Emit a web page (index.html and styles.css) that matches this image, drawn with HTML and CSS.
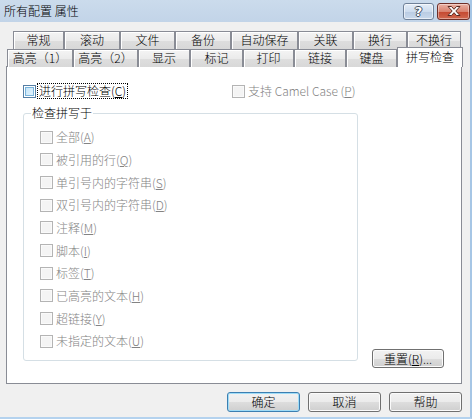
FILE: index.html
```html
<!DOCTYPE html>
<html lang="zh-CN">

<head>
  <meta charset="UTF-8">
  <meta name="viewport" content="width=device-width, initial-scale=1.0">
  <title>所有配置 属性</title>
  <link rel="stylesheet" href="styles.css">
</head>

<body>
  <div class="window">
    <div class="titlebar">
      <span class="title">所有配置 属性</span>
      <div class="caption">
        <span class="cap cap-help"><span class="cap-glyph">?</span></span>
        <span class="cap cap-close">
          <svg width="16" height="12" viewBox="0 0 16 12">
            <path d="M2 1.5h3.5L8 4.3l2.5-2.8H14L9.8 6 14 10.5h-3.5L8 7.7l-2.5 2.8H2L6.2 6z" fill="#fff" stroke="#5a2a22" stroke-width="1" stroke-linejoin="round" />
          </svg>
        </span>
      </div>
    </div>

    <div class="dialog">
      <div class="tab-row row-back">
        <div class="tab">常规</div>
        <div class="tab">滚动</div>
        <div class="tab">文件</div>
        <div class="tab">备份</div>
        <div class="tab">自动保存</div>
        <div class="tab">关联</div>
        <div class="tab">换行</div>
        <div class="tab">不换行</div>
      </div>
      <div class="tab-row row-front">
        <div class="tab">高亮（1）</div>
        <div class="tab">高亮（2）</div>
        <div class="tab">显示</div>
        <div class="tab">标记</div>
        <div class="tab">打印</div>
        <div class="tab">链接</div>
        <div class="tab">键盘</div>
        <div class="tab selected">拼写检查</div>
      </div>

      <div class="panel">
        <div class="top-options">
          <label class="check">
            <span class="box box-hot"></span>
            <span class="focus-text">进行拼写检查(<u>C</u>)</span>
          </label>
          <label class="check disabled">
            <span class="box"></span>
            <span>支持 Camel Case (<u>P</u>)</span>
          </label>
        </div>

        <div class="panel-body">
          <fieldset class="group">
            <legend>检查拼写于</legend>
            <div class="group-list">
              <label class="check disabled item"><span class="box"></span><span>全部(<u>A</u>)</span></label>
              <label class="check disabled item"><span class="box"></span><span>被引用的行(<u>Q</u>)</span></label>
              <label class="check disabled item"><span class="box"></span><span>单引号内的字符串(<u>S</u>)</span></label>
              <label class="check disabled item"><span class="box"></span><span>双引号内的字符串(<u>D</u>)</span></label>
              <label class="check disabled item"><span class="box"></span><span>注释(<u>M</u>)</span></label>
              <label class="check disabled item"><span class="box"></span><span>脚本(<u>I</u>)</span></label>
              <label class="check disabled item"><span class="box"></span><span>标签(<u>T</u>)</span></label>
              <label class="check disabled item"><span class="box"></span><span>已高亮的文本(<u>H</u>)</span></label>
              <label class="check disabled item"><span class="box"></span><span>超链接(<u>Y</u>)</span></label>
              <label class="check disabled item"><span class="box"></span><span>未指定的文本(<u>U</u>)</span></label>
            </div>
          </fieldset>
          <button class="btn btn-reset">重置(<u>R</u>)...</button>
        </div>
      </div>

      <div class="footer">
        <button class="btn btn-default">确定</button>
        <button class="btn">取消</button>
        <button class="btn">帮助</button>
      </div>
    </div>
  </div>
</body>

</html>
```

FILE: styles.css
```css
* {
  margin: 0;
  padding: 0;
  box-sizing: border-box;
}

html,
body {
  width: 472px;
  height: 419px;
  overflow: hidden;
}

body {
  background-color: #f0f0f0;
  font-family: "Noto Sans CJK SC", "Liberation Sans", sans-serif;
  font-size: 12px;
  font-weight: 300;
  color: #000;
}

.window {
  width: 472px;
  height: 419px;
  border-right: 2px solid #a6c6e5;
  border-bottom: 2px solid #b4d2ee;
}

/* title bar */
.titlebar {
  height: 22px;
  display: flex;
  align-items: center;
  justify-content: space-between;
  padding-left: 4px;
  background: linear-gradient(#cbdbec, #c2d4e8);
}

.title {
  font-size: 12px;
  line-height: 16px;
}

.caption {
  display: flex;
  gap: 3px;
}

.cap {
  display: flex;
  align-items: center;
  justify-content: center;
  height: 17px;
  border: 1px solid #6f8198;
  border-radius: 3px;
}

.cap-help {
  width: 31px;
  background: linear-gradient(#e4edf7, #cddcee 50%, #b9cbe2 51%, #c9d9ec);
  box-shadow: inset 0 0 0 1px rgba(255, 255, 255, .6);
}

.cap-glyph {
  font-family: "DejaVu Sans", sans-serif;
  font-weight: bold;
  font-size: 13px;
  line-height: 13px;
  color: #fff;
  text-shadow: 1px 0 0 #3f4c5c, -1px 0 0 #3f4c5c, 0 1px 0 #3f4c5c, 0 -1px 0 #3f4c5c;
}

.cap-close {
  width: 33px;
  border-color: #6e2f28;
  background: linear-gradient(#eab1a4, #d9826f 50%, #c4472f 51%, #d0684f);
  box-shadow: inset 0 0 0 1px rgba(255, 255, 255, .4);
}

/* dialog */
.dialog {
  padding: 9px 8px 0 6px;
}

.tab-row {
  display: grid;
}

.row-back {
  height: 18px;
  margin-left: 7px;
  grid-template-columns: 51px 56px 55px 56px 67px 55px 54px 54px;
}

.row-front {
  height: 17px;
  margin-left: 1px;
  grid-template-columns: 66px 65px 52px 53px 51px 52px 51px 66px;
}

.tab {
  border: 1px solid #898c95;
  border-bottom: none;
  background: linear-gradient(#f4f4f4, #ebebeb 50%, #dedede 51%, #d8d8d8);
  box-shadow: inset 1px 1px 0 #fff;
  text-align: center;
  line-height: 16px;
  white-space: nowrap;
}

.tab.selected {
  position: relative;
  z-index: 1;
  height: 20px;
  margin-top: -2px;
  background: #fff;
  box-shadow: none;
  line-height: 18px;
}

.panel {
  height: 318px;
  border: 1px solid #898c95;
  background-color: #fff;
  padding: 16px 17px 14px 16px;
  display: flex;
  flex-direction: column;
}

.top-options {
  display: grid;
  grid-template-columns: 209px 1fr;
  height: 14px;
  align-items: center;
}

.check {
  display: flex;
  align-items: center;
  gap: 3px;
  line-height: 14px;
  white-space: nowrap;
}

.check.disabled {
  color: #838383;
}

.box {
  width: 13px;
  height: 13px;
  flex: none;
  border: 1px solid #b4b4b4;
  background-color: #f4f4f4;
  box-shadow: inset 0 0 0 1px #fafafa;
}

.box-hot {
  border-color: #557ea4;
  background: linear-gradient(135deg, #bfe2f8, #e7f5fd);
  box-shadow: inset 0 0 0 1px #fff, inset 0 0 0 2px #79b4dc;
}

.focus-text {
  margin-left: -2px;
  padding: 0 1px;
  border: 1px dotted #000;
}

.panel-body {
  flex: 1;
  display: flex;
  align-items: flex-end;
  margin-top: 8px;
}

.group {
  width: 335px;
  height: 256px;
  margin-bottom: 8px;
  padding: 0 0 0 7px;
  border: 1px solid #d5dfe5;
  border-radius: 3px;
  align-self: flex-start;
}

.group legend {
  padding: 0 1px;
  line-height: 16px;
}

.group-list {
  margin: 5px 0 0 9px;
}

.item {
  height: 22.67px;
}

/* buttons */
.btn {
  width: 73px;
  height: 20px;
  border: 1px solid #707070;
  border-radius: 3px;
  background: linear-gradient(#f2f2f2, #ebebeb 50%, #dddddd 51%, #cfcfcf);
  box-shadow: inset 0 0 0 1px #fbfbfb;
  font-family: inherit;
  font-size: 12px;
  font-weight: 300;
  line-height: 16px;
  color: #000;
}

.btn-reset {
  width: 72px;
  height: 19px;
  margin-left: auto;
  margin-bottom: 1px;
}

.btn-default {
  border-color: #3c7fb1;
  box-shadow: inset 0 0 0 1px #9fdcf7;
}

.footer {
  display: flex;
  justify-content: flex-end;
  gap: 8px;
  padding-top: 8px;
}
```
